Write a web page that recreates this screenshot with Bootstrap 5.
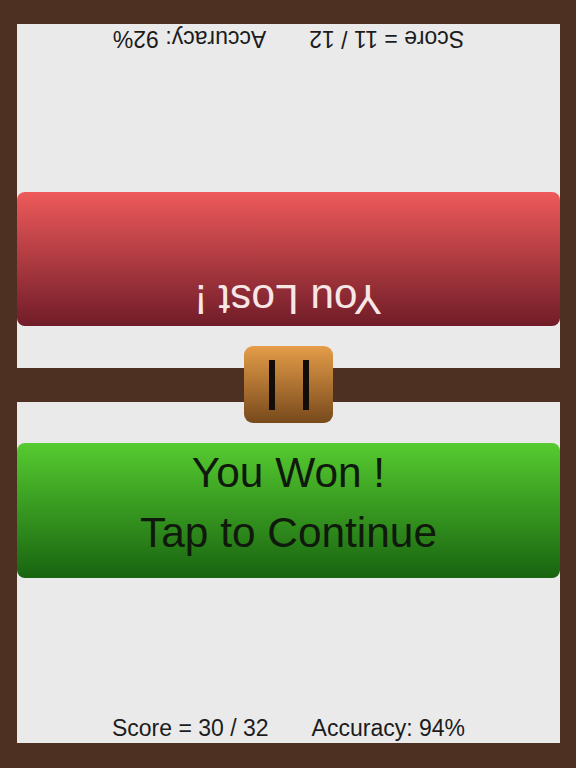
<!DOCTYPE html>
<html lang="en">
<head>
<meta charset="utf-8">
<title>Tap game</title>
<link href="https://cdn.jsdelivr.net/npm/bootstrap@5.3.0/dist/css/bootstrap.min.css" rel="stylesheet">
<style>
html, body { height: 100%; }
body { background: #4d3022; font-family: "Liberation Sans", Arial, sans-serif; color: #1a1a1a; overflow: hidden; }
.game-frame { height: 768px; padding: 24px 16px 25px 17px; }
.player-panel { background: #eaeaea; height: 341px; flex: none; }
.player-panel.flipped { height: 344px; transform: rotate(180deg); }
.divider-bar { height: 34px; flex: none; }
.result-box { height: 135px; margin-top: 41px; border-radius: 8px; font-size: 42.4px; line-height: 60px; color: #101a0c; }
.flipped .result-box { margin-top: 42px; height: 134px; line-height: 54px; color: #f6e6e6; }
.result-won { background: linear-gradient(#56cb30, #186410); }
.flipped .result-lost { background: linear-gradient(#701c28, #ee5a5a); }
.score-line { font-size: 23px; line-height: 30px; gap: 43px; color: #1c1c1c; }
.pause-btn { left: 244px; top: 346px; width: 89px; height: 77px; border-radius: 9px; background: linear-gradient(#e59d48, #77491c); border: 0; gap: 28px; padding: 0; }
.pause-mark { width: 6px; height: 50px; background: #140c06; }
</style>
</head>
<body>
<div class="game-frame d-flex flex-column position-relative">
  <section class="player-panel flipped d-flex flex-column">
    <div class="result-box result-lost text-center">
      <div>You Lost !</div>
    </div>
    <div class="score-line mt-auto d-flex justify-content-center">
      <span>Score = 11 / 12</span><span>Accuracy: 92%</span>
    </div>
  </section>
  <div class="divider-bar"></div>
  <section class="player-panel d-flex flex-column">
    <div class="result-box result-won text-center">
      <div>You Won !</div>
      <div>Tap to Continue</div>
    </div>
    <div class="score-line mt-auto d-flex justify-content-center">
      <span>Score = 30 / 32</span><span>Accuracy: 94%</span>
    </div>
  </section>
  <button type="button" class="pause-btn position-absolute d-flex justify-content-center align-items-center" aria-label="Pause">
    <span class="pause-mark"></span><span class="pause-mark"></span>
  </button>
</div>
<script src="https://cdn.jsdelivr.net/npm/bootstrap@5.3.0/dist/js/bootstrap.bundle.min.js"></script>
</body>
</html>
